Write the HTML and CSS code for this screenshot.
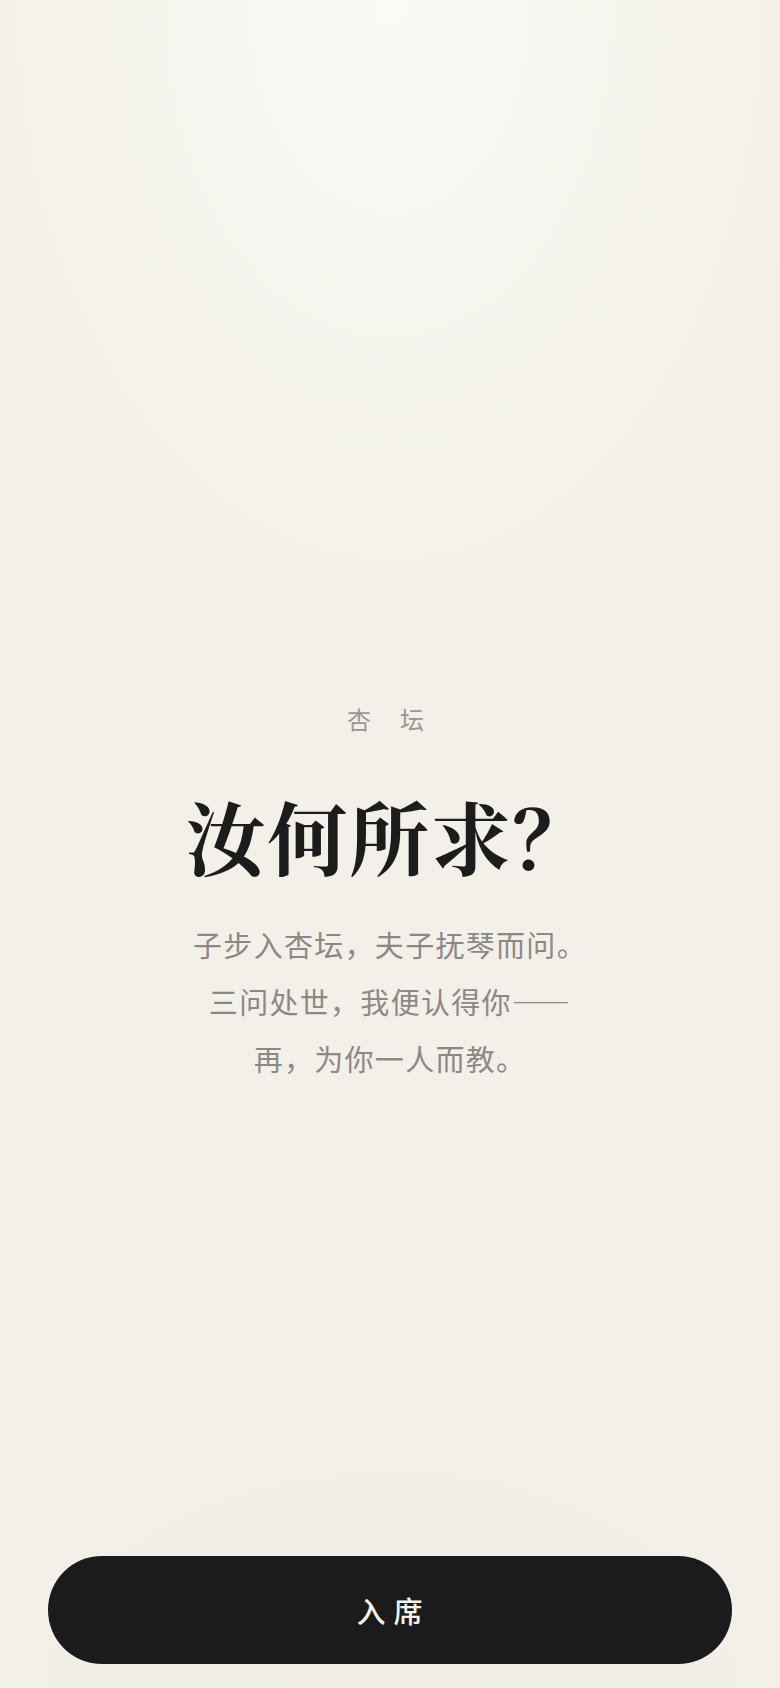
FILE: index.html
```html
<!DOCTYPE html>
<html lang="zh-CN">
<head>
<meta charset="utf-8">
<meta name="viewport" content="width=device-width, initial-scale=1">
<title>杏坛</title>
<link rel="stylesheet" href="styles.css">
</head>
<body>
<main class="screen">
  <section class="hero">
    <div class="brand">杏坛</div>
    <h1 class="title">汝何所求？</h1>
    <p class="intro">子步入杏坛，夫子抚琴而问。<br>三问处世，我便认得你——<br>再，为你一人而教。</p>
  </section>
  <footer class="actions">
    <button class="enter" type="button">入席</button>
  </footer>
</main>
</body>
</html>
```

FILE: styles.css
```css
* { box-sizing: border-box; }
html, body { margin: 0; padding: 0; }
body {
  width: 780px;
  height: 1688px;
  background-color: #f3f0ea;
  font-family: "Noto Sans CJK SC", "Noto Sans", sans-serif;
}
.screen {
  position: relative;
  height: 1688px;
  display: flex;
  flex-direction: column;
  background:
    radial-gradient(ellipse 440px 660px at 50% 0%, rgba(252,250,245,1) 0%, rgba(250,248,242,0.7) 40%, rgba(243,240,234,0) 100%),
    radial-gradient(ellipse 420px 260px at 50% 100%, rgba(240,236,229,0.8) 0%, rgba(243,240,234,0) 100%),
    #f3f0ea;
}
.hero {
  flex: 1;
  display: flex;
  flex-direction: column;
  align-items: center;
  padding-top: 699px;
}
.brand {
  font-size: 24px;
  line-height: 40px;
  color: #9a9693;
  letter-spacing: 29px;
  padding-left: 20px;
}
.title {
  margin: 46px 0 0;
  font-family: "Noto Serif CJK SC", "Source Han Serif SC", "Liberation Serif", serif;
  font-weight: 700;
  font-size: 80px;
  line-height: 100px;
  color: #1c1c1c;
  letter-spacing: 1.7px;
}
.intro {
  margin: 31px 0 0;
  text-align: center;
  font-size: 29px;
  line-height: 57px;
  letter-spacing: 1.3px;
  color: #8c8884;
}
.actions {
  padding: 0 48px 24px;
}
.enter {
  display: block;
  width: 100%;
  height: 108px;
  border: 0;
  border-radius: 54px;
  background: #1b1b1b;
  color: #f5f3ef;
  font-family: "Noto Sans CJK SC", sans-serif;
  font-size: 29px;
  font-weight: 500;
  letter-spacing: 8px;
  padding-left: 13px;
}
```
